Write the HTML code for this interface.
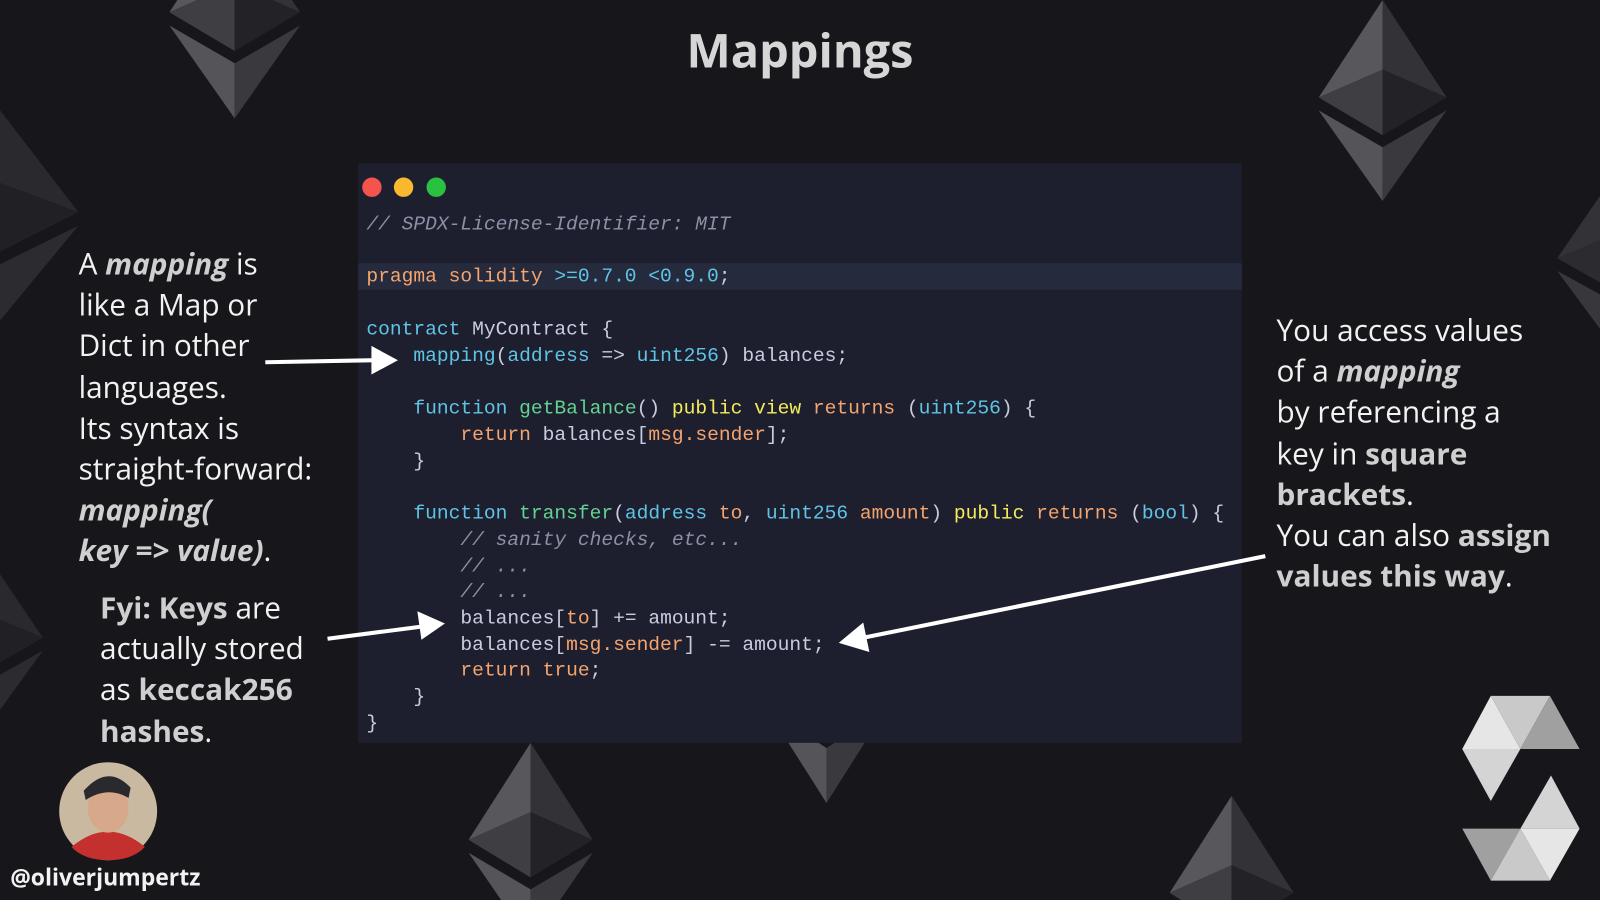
<!DOCTYPE html>
<html style="width:1600px;height:900px;overflow:hidden"><head><meta charset="utf-8"><style>
html,body{margin:0;padding:0;background:#17171b;overflow:hidden;width:1600px;height:900px;position:relative}
#w{position:absolute;left:0;top:0;width:1568px;height:882px;overflow:hidden;transform:scale(1.0204);transform-origin:0 0;background:#17171b;font-family:"Open Sans","Liberation Sans",sans-serif}
svg.bg{position:absolute;left:0;top:0}
.t{position:absolute;color:#f2f2f2;font-size:29.2px;line-height:40.2px;white-space:nowrap}
.t b{color:#cfcfcf}
#title{position:absolute;left:0;width:1568px;text-align:center;top:18px;font-size:46px;font-weight:bold;color:#d6d6d6}
#code{position:absolute;left:351px;top:160px;width:866px;height:568px;background:#1e1f2e}
pre{position:absolute;left:8px;top:48px;margin:0;font-family:"Liberation Mono",monospace;font-size:19.2px;line-height:25.74px;color:#c9cbe0}
.c{color:#8d90a6;font-style:italic}.o{color:#f4a46e}.b{color:#5ec4e6}.g{color:#62d392}.y{color:#f3ec5b}
.hl{position:absolute;left:0;top:98px;width:866px;height:26px;background:#252a3d}
.dot{position:absolute;top:14px;width:19px;height:19px;border-radius:50%}
</style></head><body><div id="w">
<svg class="bg" width="1568" height="882">
<defs><g id="e">
<polygon points="0,0 -64,98 0,70" fill="#58585c"/><polygon points="0,0 64,98 0,70" fill="#333337"/>
<polygon points="-64,98 0,70 0,136" fill="#3f3f43"/><polygon points="64,98 0,70 0,136" fill="#232327"/>
<polygon points="-64,111 0,148 0,202" fill="#555559"/><polygon points="64,111 0,148 0,202" fill="#3a3a3e"/></g>
<g id="d">
<polygon points="0,0 -64,98 0,70" fill="#333337"/><polygon points="0,0 64,98 0,70" fill="#2a2a2e"/>
<polygon points="-64,98 0,70 0,136" fill="#2c2c30"/><polygon points="64,98 0,70 0,136" fill="#212125"/>
<polygon points="-64,111 0,148 0,202" fill="#38383c"/><polygon points="64,111 0,148 0,202" fill="#2c2c30"/></g></defs>
<use href="#e" transform="translate(230,-86)"/>
<use href="#d" transform="translate(0,108) scale(1.2,1.02)"/>
<use href="#e" transform="translate(1355,0) scale(0.98,0.975)"/>
<use href="#d" transform="translate(1590,160) scale(1,0.95)"/>
<use href="#d" transform="translate(-22,530) scale(1,0.97)"/>
<use href="#e" transform="translate(520,728) scale(0.95,0.97)"/>
<use href="#e" transform="translate(810,585) scale(0.9,1)"/>
<use href="#e" transform="translate(1207,780) scale(0.95,0.97)"/>
<polygon points="1461,682 1433,734 1490,734" fill="#e6e6e6"/><polygon points="1461,682 1519,682 1490,734" fill="#c9c9c9"/>
<polygon points="1519,682 1490,734 1548,734" fill="#a0a0a0"/><polygon points="1433,734 1490,734 1461,785" fill="#d4d4d4"/>
<polygon points="1520,760 1490,812 1548,812" fill="#d4d4d4"/><polygon points="1433,812 1490,812 1461,863" fill="#a0a0a0"/>
<polygon points="1490,812 1461,863 1519,863" fill="#c9c9c9"/><polygon points="1490,812 1548,812 1519,863" fill="#e6e6e6"/>
<circle cx="106" cy="795" r="48" fill="#c9b9a0"/>
<path d="M70,830 Q106,800 142,830 Q130,843 106,843 Q82,843 70,830Z" fill="#c4302e"/>
<ellipse cx="106" cy="792" rx="20" ry="24" fill="#d8a88a"/>
<path d="M82,775 Q106,748 128,772 L126,782 Q106,770 84,784Z" fill="#2a2a2e"/>
</svg>
<div id="title">Mappings</div>
<div id="code"><div class="hl"></div>
<div class="dot" style="left:4px;background:#f5544d"></div><div class="dot" style="left:35px;background:#f9b92e"></div><div class="dot" style="left:67px;background:#29c13f"></div>
<pre><span class="c">// SPDX-License-Identifier: MIT</span>

<span class="o">pragma solidity</span> <span class="b">&gt;=0.7.0 &lt;0.9.0</span>;

<span class="b">contract</span> MyContract {
    <span class="b">mapping</span>(<span class="b">address</span> =&gt; <span class="b">uint256</span>) balances;

    <span class="b">function</span> <span class="g">getBalance</span>() <span class="y">public view</span> <span class="o">returns</span> (<span class="b">uint256</span>) {
        <span class="o">return</span> balances[<span class="o">msg.sender</span>];
    }

    <span class="b">function</span> <span class="g">transfer</span>(<span class="b">address</span> <span class="o">to</span>, <span class="b">uint256</span> <span class="o">amount</span>) <span class="y">public</span> <span class="o">returns</span> (<span class="b">bool</span>) {
        <span class="c">// sanity checks, etc...</span>
        <span class="c">// ...</span>
        <span class="c">// ...</span>
        balances[<span class="o">to</span>] += amount;
        balances[<span class="o">msg.sender</span>] -= amount;
        <span class="o">return true</span>;
    }
}</pre></div>
<svg class="bg" width="1568" height="882" style="pointer-events:none">
<g stroke="#fff" stroke-width="4" fill="#fff">
<line x1="260" y1="355" x2="368" y2="353"/><polygon points="364,339 390,353 364,367" stroke="none"/>
<line x1="321" y1="626" x2="414" y2="614"/><polygon points="409,599 436,611 413,627" stroke="none"/>
<line x1="1240" y1="545" x2="846" y2="625"/><polygon points="846,610 822,630 852,639" stroke="none"/>
</g></svg>
<div class="t" style="left:77px;top:238px">A <b><i>mapping</i></b> is<br>like a Map or<br>Dict in other<br>languages.<br>Its syntax is<br>straight-forward:<br><b><i>mapping(</i></b><br><b><i>key =&gt; value)</i></b>.</div>
<div class="t" style="left:98px;top:575px"><b>Fyi: Keys</b> are<br>actually stored<br>as <b>keccak256</b><br><b>hashes</b>.</div>
<div class="t" style="left:1251px;top:303px">You access values<br>of a <b><i>mapping</i></b><br>by referencing a<br>key in <b>square</b><br><b>brackets</b>.<br>You can also <b>assign</b><br><b>values this way</b>.</div>
<div class="t" style="left:10px;top:845px;font-size:22.5px;line-height:30px;font-weight:bold;color:#f2f2f2">@oliverjumpertz</div>
</div></body></html>
